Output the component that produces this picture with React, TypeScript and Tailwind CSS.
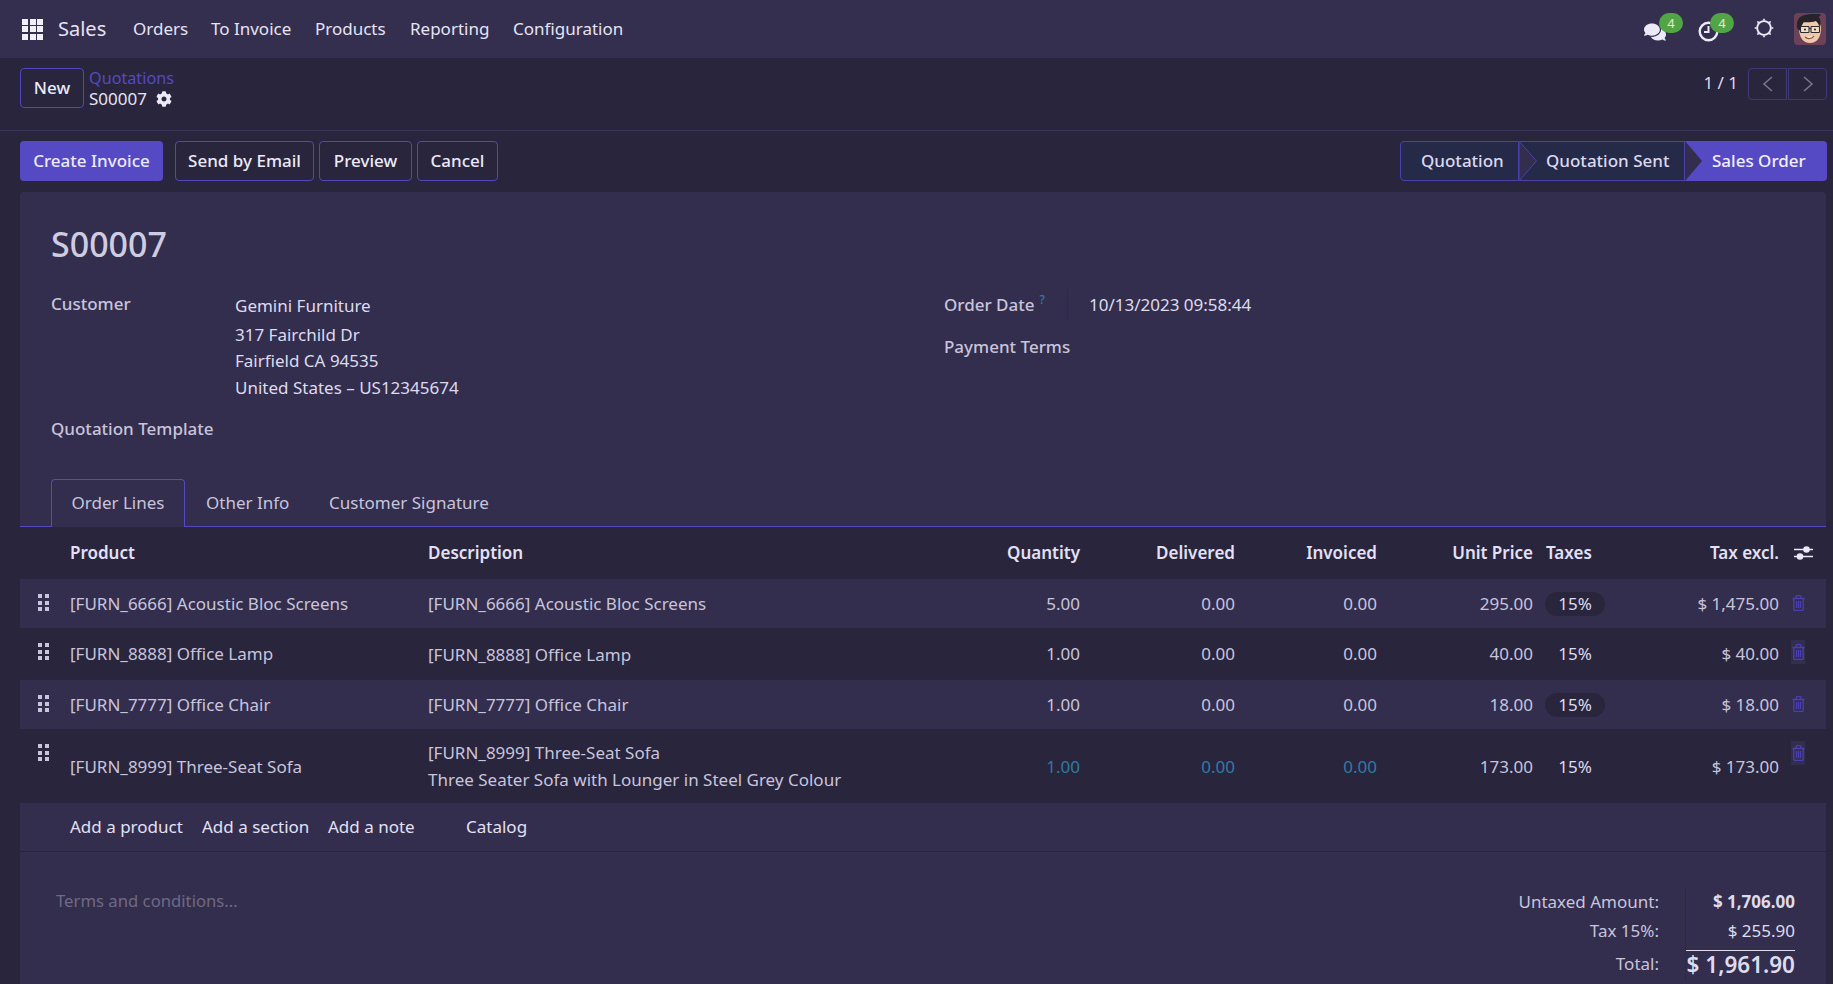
import React from "react";
import { FaCog, FaComments } from "react-icons/fa";

const COLS = "grid grid-cols-[50px_358px_572px_80px_155px_142px_156px_107px_139px_47px]";

function GridIcon() {
  return (
    <div className="grid grid-cols-3 gap-[1.5px] w-[21px] h-[21px]">
      {Array.from({ length: 9 }).map((_, i) => (
        <div key={i} className="bg-[#f1eff9]" />
      ))}
    </div>
  );
}

function Handle() {
  return (
    <div className="grid grid-cols-2 gap-x-[3px] gap-y-[2.5px] w-[11px]">
      {Array.from({ length: 6 }).map((_, i) => (
        <div key={i} className="w-1 h-1 bg-[#c8c4dc]" />
      ))}
    </div>
  );
}

function Trash({ bg }: { bg?: boolean }) {
  return (
    <div className={`w-[14px] h-6 flex items-center justify-center ${bg ? "bg-[#332e4d]" : ""}`}>
      <svg width="13" height="16" viewBox="0 0 13 16" fill="none" stroke="#4a3fb0" strokeWidth="1.3">
        <path d="M0.5 3.5h12M4.2 3.3V1.4c0-.4.3-.8.8-.8h3c.5 0 .8.4.8.8v1.9M1.8 3.5v10.7c0 .7.5 1.2 1.1 1.2h7.2c.6 0 1.1-.5 1.1-1.2V3.5" />
        <path d="M4.5 6v7M6.5 6v7M8.5 6v7" />
      </svg>
    </div>
  );
}

function Sun() {
  const teeth = Array.from({ length: 8 }).map((_, i) => i * 45);
  return (
    <svg width="20" height="20" viewBox="0 0 20 20">
      {teeth.map((a) => (
        <path key={a} d="M8.4 2.6 10 0.2l1.6 2.4z" fill="#eceaf8" transform={`rotate(${a} 10 10)`} />
      ))}
      <circle cx="10" cy="10" r="6.8" fill="none" stroke="#eceaf8" strokeWidth="1.8" />
    </svg>
  );
}

function Clock() {
  return (
    <svg width="21" height="21" viewBox="0 0 21 21" fill="none" stroke="#eceaf8" strokeWidth="2.4">
      <circle cx="10.5" cy="10.5" r="8.8" />
      <path d="M10.5 5v6H6" strokeWidth="2" />
    </svg>
  );
}

function Avatar() {
  return (
    <svg width="32" height="32" viewBox="0 0 32 32" className="rounded-[4px] block">
      <rect width="32" height="32" fill="#6d4158" />
      <path d="M5 15c0-6 4-9 11-9s11 3 11 9c0 9-4 15-11 15S5 24 5 15z" fill="#eec9ab" />
      <path d="M3.5 16C2 11 3 5 8 3c4-2 14-2.500 19-1.500-.7 1.500-1.500 2-2.500 2.500 2.500 2 2.500 7 1.300 10.500-1-3-2-5-4-6.500-4 1.500-9 1.500-12 1.200C8.300 11 7 14 6.500 18z" fill="#26242a" />
      <rect x="6.500" y="13.500" width="8.500" height="6" rx="0.8" fill="#f4dcc6" stroke="#2b2b2b" strokeWidth="1.100" />
      <rect x="17" y="13.500" width="8.500" height="6" rx="0.800" fill="#f4dcc6" stroke="#2b2b2b" strokeWidth="1.100" />
      <path d="M15 15.500h2" stroke="#2b2b2b" strokeWidth="1" />
      <circle cx="11" cy="16.500" r="1" fill="#222" />
      <circle cx="21" cy="16.500" r="1" fill="#222" />
      <path d="M11 24c2.500 2.500 7 2 9-1" stroke="#8a4a3a" strokeWidth="1.100" fill="#f7efe6" />
    </svg>
  );
}

function Badge() {
  return (
    <div className="absolute w-6 h-5 rounded-full bg-[#52a544] text-[#e6e9cf] text-[13px] leading-5 text-center">4</div>
  );
}

function OutlineBtn({ w, children }: { w: string; children: React.ReactNode }) {
  return (
    <div className={`${w} h-10 rounded-[4px] border border-[#5247b8] flex items-center justify-center text-[#eceaf8] font-medium`}>
      {children}
    </div>
  );
}

const navItems = [
  ["Orders", "w-[78px]"],
  ["To Invoice", "w-[104px]"],
  ["Products", "w-[95px]"],
  ["Reporting", "w-[103px]"],
  ["Configuration", "w-[130px]"],
];

type Row = {
  product: string;
  desc: string[];
  qty: string;
  del: string;
  inv: string;
  price: string;
  total: string;
  tall?: boolean;
  dark?: boolean;
  blue?: boolean;
};

const rows: Row[] = [
  { product: "[FURN_6666] Acoustic Bloc Screens", desc: ["[FURN_6666] Acoustic Bloc Screens"], qty: "5.00", del: "0.00", inv: "0.00", price: "295.00", total: "$ 1,475.00" },
  { product: "[FURN_8888] Office Lamp", desc: ["[FURN_8888] Office Lamp"], qty: "1.00", del: "0.00", inv: "0.00", price: "40.00", total: "$ 40.00", dark: true },
  { product: "[FURN_7777] Office Chair", desc: ["[FURN_7777] Office Chair"], qty: "1.00", del: "0.00", inv: "0.00", price: "18.00", total: "$ 18.00" },
  { product: "[FURN_8999] Three-Seat Sofa", desc: ["[FURN_8999] Three-Seat Sofa", "Three Seater Sofa with Lounger in Steel Grey Colour"], qty: "1.00", del: "0.00", inv: "0.00", price: "173.00", total: "$ 173.00", dark: true, tall: true, blue: true },
];

function Num({ v, blue, tall }: { v: string; blue?: boolean; tall?: boolean }) {
  return <div className={`flex items-center justify-end ${tall ? "pt-[2px]" : ""} ${blue ? "text-[#2f7ba6]" : ""}`}>{v}</div>;
}

export default function App() {
  return (
    <div className="w-[1833px] h-[984px] overflow-hidden bg-[#29253c] flex flex-col text-[17px] text-[#c8c4dc] font-['Noto_Sans',sans-serif]">
      {/* top nav */}
      <div className="h-[58px] shrink-0 bg-[#342f4e] flex items-center text-[#e6e3f5]">
        <div className="ml-[22px] mr-[15px]">
          <GridIcon />
        </div>
        <div className="w-[75px] text-[20px]">Sales</div>
        {navItems.map(([t, w]) => (
          <div key={t} className={w}>
            {t}
          </div>
        ))}
        <div className="ml-auto flex items-center mr-[7px]">
          <div className="relative w-[56px] h-[32px] flex items-center">
            <FaComments className="text-[#eceaf8] text-[22px] mt-[5px]" />
            <div className="absolute left-[15px] top-[0px]"><Badge /></div>
          </div>
          <div className="relative w-[56px] h-[32px] flex items-center -ml-px">
            <div className="mt-[5px] -ml-px"><Clock /></div>
            <div className="absolute left-[11px] top-[0px]"><Badge /></div>
          </div>
          <div className="w-[40px] h-[32px] flex items-center -mt-[2px] -ml-px"><Sun /></div>
          <Avatar />
        </div>
      </div>

      {/* control panel */}
      <div className="h-[73px] shrink-0 border-b border-[#3a3557] flex items-start pt-[10px] pl-5 pr-[6px]">
        <OutlineBtn w="w-[64px]">New</OutlineBtn>
        <div className="ml-[5px] -mt-[1px] flex flex-col">
          <div className="text-[#5549c4] text-[16.2px] leading-[22px]">Quotations</div>
          <div className="flex items-center gap-[9px] text-[#e6e3f5] leading-[20px]">
            S00007 <FaCog className="text-[16px] text-[#eceaf8]" />
          </div>
        </div>
        <div className="ml-auto flex items-start">
          <div className="text-[#dedbee] mr-[10px] mt-[2px]">1 / 1</div>
          <div className="w-[39px] h-8 rounded-l-[4px] border border-[#3f3a76] flex items-center justify-center">
            <svg width="14" height="16" viewBox="0 0 14 16" fill="none" stroke="#77748f" strokeWidth="1.6"><path d="M11 1 3 8l8 7" /></svg>
          </div>
          <div className="ml-[1px] w-[39px] h-8 rounded-r-[4px] border border-[#3f3a76] flex items-center justify-center">
            <svg width="14" height="16" viewBox="0 0 14 16" fill="none" stroke="#77748f" strokeWidth="1.6"><path d="M3 1l8 7-8 7" /></svg>
          </div>
        </div>
      </div>

      {/* action bar */}
      <div className="h-[61px] shrink-0 flex items-start pt-[10px] pl-5 pr-[6px]">
        <div className="w-[143px] h-10 rounded-[4px] bg-[#5549c4] flex items-center justify-center text-[#eceaf8] font-medium">Create Invoice</div>
        <div className="ml-3"><OutlineBtn w="w-[139px]">Send by Email</OutlineBtn></div>
        <div className="ml-[5px]"><OutlineBtn w="w-[93px]">Preview</OutlineBtn></div>
        <div className="ml-[5px]"><OutlineBtn w="w-[81px]">Cancel</OutlineBtn></div>
        <div className="ml-auto flex h-10 font-medium">
          <div className="relative w-[119px] rounded-l-[4px] border border-[#4a41ad] bg-[#242a47] text-[#dbd8f0] flex items-center pl-[20px]">Quotation</div>
          <div className="relative w-[166px] border-y border-r border-[#4a41ad] bg-[#242a47] text-[#dbd8f0] flex items-center pl-[27px]">
            <svg className="absolute left-0 -top-px" width="19" height="40" viewBox="0 0 19 40"><path d="M0 0 17.500 20 0 40z" fill="#332e4d" stroke="#4a41ad" strokeWidth="1" /></svg>
            Quotation Sent
          </div>
          <div className="relative w-[142px] rounded-r-[4px] bg-[#5549c4] text-[#f1eff9] flex items-center pl-[27px]">
            <svg className="absolute left-0 top-0" width="18" height="40" viewBox="0 0 18 40"><path d="M0 0 17 20 0 40z" fill="#332e4d" /></svg>
            Sales Order
          </div>
        </div>
      </div>

      {/* sheet */}
      <div className="ml-5 mr-[7px] flex-1 bg-[#332e4d] rounded-t-[4px] overflow-hidden flex flex-col">
        <div className="h-[287px] shrink-0 pl-[31px] flex">
          <div className="w-[893px] shrink-0">
            <div className="mt-[32px] text-[34px] leading-[40px] font-medium text-[#cfcce2]">S00007</div>
            <div className="mt-[28px] flex">
              <div className="w-[184px] font-medium text-[#c8c4dc] leading-[24px]">Customer</div>
              <div className="text-[#dedbee]">
                <div className="leading-[26px] mt-[1px]">Gemini Furniture</div>
                <div className="leading-[26px] mt-[3px]">317 Fairchild Dr</div>
                <div className="leading-[26px]">Fairfield CA 94535</div>
                <div className="leading-[26px] mt-[1px]">United States – US12345674</div>
              </div>
            </div>
            <div className="mt-[16px] font-medium leading-[24px] text-[#c8c4dc]">Quotation Template</div>
          </div>
          <div className="pt-[97px]">
            <div className="flex items-center h-8">
              <div className="w-[123px] flex items-start font-medium text-[#c8c4dc] leading-[24px]">
                Order Date<span className="text-[#2f7ba6] text-[12px] ml-[5px] leading-[14px]">?</span>
              </div>
              <div className="w-px h-8 bg-[#2d2943]" />
              <div className="ml-[21px] text-[#dedbee]">10/13/2023 09:58:44</div>
            </div>
            <div className="mt-[14px] font-medium leading-[24px] text-[#c8c4dc]">Payment Terms</div>
          </div>
        </div>

        {/* tabs */}
        <div className="h-[48px] shrink-0 border-b border-[#5549c4] flex items-stretch pl-[31px] text-[#c8c4dc]">
          <div className="w-[134px] -mb-px border border-b-0 border-[#5549c4] rounded-t-[4px] bg-[#332e4d] flex items-center justify-center pb-[2px]">Order Lines</div>
          <div className="w-[124px] flex items-center pl-[21px]">Other Info</div>
          <div className="flex items-center pl-[20px]">Customer Signature</div>
        </div>

        {/* table header */}
        <div className={`${COLS} h-[52px] shrink-0 bg-[#29253c] items-center font-semibold text-[#e3e0f5]`}>
          <div />
          <div>Product</div>
          <div>Description</div>
          <div className="text-right">Quantity</div>
          <div className="text-right">Delivered</div>
          <div className="text-right">Invoiced</div>
          <div className="text-right">Unit Price</div>
          <div className="pl-[13px]">Taxes</div>
          <div className="text-right">Tax excl.</div>
          <div className="flex justify-center pl-[1px]">
            <svg width="19" height="16" viewBox="0 0 19 16" stroke="#eceaf8" strokeWidth="1.4" fill="#eceaf8">
              <path d="M0 4.500h19M0 11.500h19" />
              <circle cx="12.500" cy="4.500" r="2.600" />
              <circle cx="6" cy="11.500" r="2.600" />
            </svg>
          </div>
        </div>

        {rows.map((r) => (
          <div key={r.product} className={`${COLS} shrink-0 ${r.tall ? "h-[74px]" : r.dark ? "h-[52px]" : "h-[49px]"} ${r.dark ? "bg-[#29253c]" : ""}`}>
            <div className="pl-[18px] pt-[15px]"><Handle /></div>
            <div className={`flex items-center ${r.tall ? "pt-[2px]" : ""}`}>{r.product}</div>
            <div className="flex flex-col justify-center leading-[27px]">
              {r.desc.map((d) => (
                <div key={d}>{d}</div>
              ))}
            </div>
            <Num v={r.qty} blue={r.blue} tall={r.tall} />
            <Num v={r.del} blue={r.blue} tall={r.tall} />
            <Num v={r.inv} blue={r.blue} tall={r.tall} />
            <Num v={r.price} tall={r.tall} />
            <div className={`flex items-center pl-[12px] ${r.tall ? "pt-[2px]" : ""}`}>
              <div className={`w-[60px] h-6 rounded-full flex items-center justify-center text-[#dedbee] ${r.dark ? "" : "bg-[#29253c]"}`}>15%</div>
            </div>
            <Num v={r.total} tall={r.tall} />
            <div className="pl-[12px] pt-[12px]"><Trash bg={r.dark} /></div>
          </div>
        ))}

        {/* add line */}
        <div className="h-[49px] shrink-0 border-b border-[#29253c] flex items-center pl-[50px] text-[#e3e0f5]">
          <div className="w-[132px]">Add a product</div>
          <div className="w-[126px]">Add a section</div>
          <div className="w-[138px]">Add a note</div>
          <div>Catalog</div>
        </div>

        {/* footer */}
        <div className="flex justify-between pl-9 pr-[31px] pt-[36px]">
          <div className="text-[#6e6a85] text-[16.7px]">Terms and conditions...</div>
          <div className="flex -mt-[1px]">
            <div className="w-[200px] text-right pr-[26px] text-[#c8c4dc]">
              <div className="h-[29px] leading-[29px]">Untaxed Amount:</div>
              <div className="h-[34px] leading-[29px]">Tax 15%:</div>
              <div className="h-[30px] leading-[28px]">Total:</div>
            </div>
            <div className="w-[110px] border-l border-[#2d2943] text-right text-[#dedbee]">
              <div className="h-[29px] leading-[29px] font-bold">$ 1,706.00</div>
              <div className="h-[34px] leading-[29px]">$ 255.90</div>
              <div className="h-[30px] leading-[28px] font-semibold text-[22.5px] border-t border-[#dedbee] whitespace-nowrap">$ 1,961.90</div>
            </div>
          </div>
        </div>
      </div>
    </div>
  );
}
